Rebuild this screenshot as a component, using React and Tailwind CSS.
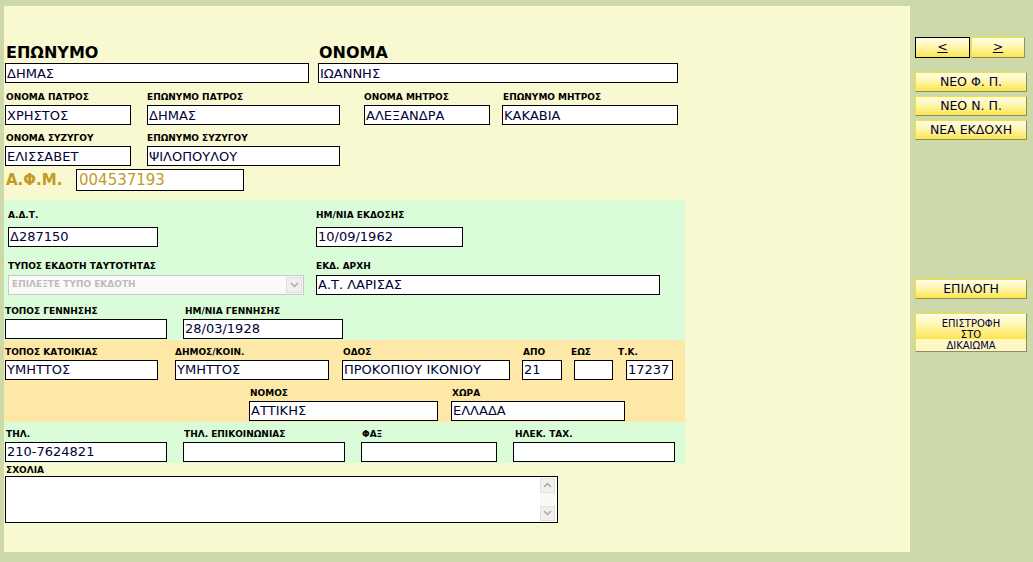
import React from "react";

const INP =
  "block h-[20px] border border-black bg-white px-[1px] text-[13px] text-[#000033] outline-none font-['DejaVu_Sans',sans-serif] rounded-none";

function Label({ children, className = "" }) {
  return (
    <div
      className={
        "h-[12px] text-[9px] leading-[12px] font-bold text-black whitespace-nowrap " +
        className
      }
    >
      {children}
    </div>
  );
}

function Field({ label, value = "", w, className = "", gap = "gap-[2px]", labelClass = "" }) {
  return (
    <div className={"flex flex-col " + gap + " " + className}>
      <Label className={labelClass}>{label}</Label>
      <input readOnly value={value} className={INP + " " + w} />
    </div>
  );
}

const BTN =
  "flex items-center justify-center border border-[#f2e22a] border-r-[#8f8d5e] border-b-[#8f8d5e] bg-linear-to-b from-[#fffdea] via-[#fff5a6] to-[#fde444] text-[12.5px] text-[#000033] font-['DejaVu_Sans',sans-serif]";

function Chevron({ up = false }) {
  return (
    <svg width="9" height="6" viewBox="0 0 9 6">
      <path
        d={up ? "M1 5 L4.5 1.5 L8 5" : "M1 1 L4.5 4.5 L8 1"}
        fill="none"
        stroke="#a8a8a8"
        strokeWidth="1.5"
      />
    </svg>
  );
}

export default function App() {
  return (
    <div className="w-[1033px] h-[562px] bg-[#cdd9a8] flex font-['DejaVu_Sans',sans-serif] text-black">
      {/* Main panel */}
      <div className="ml-[4px] mt-[6px] w-[906px] h-[546px] bg-[#f8f8d1] flex flex-col">
        {/* Row 1 */}
        <div className="flex pl-[1px] pt-[38px]">
          <div className="flex flex-col gap-[1px]">
            <div className="h-[18px] text-[16px] leading-[18px] font-bold pl-[1px]">ΕΠΩΝΥΜΟ</div>
            <input readOnly value="ΔΗΜΑΣ" className={INP + " w-[304px]"} />
          </div>
          <div className="flex flex-col gap-[1px] ml-[9px]">
            <div className="h-[18px] text-[16px] leading-[18px] font-bold pl-[1px]">ΟΝΟΜΑ</div>
            <input readOnly value="ΙΩΑΝΝΗΣ" className={INP + " w-[360px]"} />
          </div>
        </div>

        {/* Row 2 */}
        <div className="flex pl-[1px] mt-[8px]">
          <Field label="ΟΝΟΜΑ ΠΑΤΡΟΣ" value="ΧΡΗΣΤΟΣ" w="w-[126px]" labelClass="pl-[1px]" />
          <Field label="ΕΠΩΝΥΜΟ ΠΑΤΡΟΣ" value="ΔΗΜΑΣ" w="w-[193px]" className="ml-[16px]" />
          <Field label="ΟΝΟΜΑ ΜΗΤΡΟΣ" value="ΑΛΕΞΑΝΔΡΑ" w="w-[126px]" className="ml-[24px]" />
          <Field label="ΕΠΩΝΥΜΟ ΜΗΤΡΟΣ" value="ΚΑΚΑΒΙΑ" w="w-[176px]" className="ml-[12px]" labelClass="pl-[1px]" />
        </div>

        {/* Row 3 */}
        <div className="flex pl-[1px] mt-[7px]">
          <Field label="ΟΝΟΜΑ ΣΥΖΥΓΟΥ" value="ΕΛΙΣΣΑΒΕΤ" w="w-[126px]" labelClass="pl-[1px]" />
          <Field label="ΕΠΩΝΥΜΟ ΣΥΖΥΓΟΥ" value="ΨΙΛΟΠΟΥΛΟΥ" w="w-[193px]" className="ml-[16px]" />
        </div>

        {/* ΑΦΜ */}
        <div className="flex items-center pl-[2px] mt-[3px]">
          <div className="w-[70px] text-[15px] font-bold text-[#c49a22]">Α.Φ.Μ.</div>
          <input
            readOnly
            value="004537193"
            className="block h-[22px] w-[168px] border border-black bg-white pl-[2px] text-[15px] text-[#c49a22] outline-none font-['DejaVu_Sans',sans-serif]"
          />
        </div>

        {/* Green section 1 */}
        <div className="mt-[8px] w-[681px] bg-[#dafcd9] flex flex-col pt-[9px] pb-[1px]">
          <div className="flex">
            <Field label="Α.Δ.Τ." value="Δ287150" w="w-[150px]" className="ml-[4px]" gap="gap-[6px]" />
            <Field label="ΗΜ/ΝΙΑ ΕΚΔΟΣΗΣ" value="10/09/1962" w="w-[147px]" className="ml-[158px]" gap="gap-[6px]" />
          </div>
          <div className="flex mt-[13px]">
            <div className="ml-[4px] flex flex-col gap-[3px]">
              <Label>ΤΥΠΟΣ ΕΚΔΟΤΗ ΤΑΥΤΟΤΗΤΑΣ</Label>
              <div className="w-[296px] h-[20px] border border-[#c8c8c8] bg-[#fafafa] flex items-center">
                <span className="flex-1 pl-[3px] text-[9px] font-bold text-[#bcbcbc] whitespace-nowrap">
                  ΕΠΙΛΕΞΤΕ ΤΥΠΟ ΕΚΔΟΤΗ
                </span>
                <div className="w-[16px] h-[16px] mr-[1px] border border-[#dedede] bg-[#efefef] flex items-center justify-center">
                  <Chevron />
                </div>
              </div>
            </div>
            <Field label="ΕΚΔ. ΑΡΧΗ" value="Α.Τ. ΛΑΡΙΣΑΣ" w="w-[344px]" className="ml-[12px]" gap="gap-[3px]" />
          </div>
          <div className="flex mt-[10px]">
            <Field label="ΤΟΠΟΣ ΓΕΝΝΗΣΗΣ" value="" w="w-[162px]" className="ml-[1px]" />
            <Field label="ΗΜ/ΝΙΑ ΓΕΝΝΗΣΗΣ" value="28/03/1928" w="w-[160px]" className="ml-[16px]" labelClass="pl-[2px]" />
          </div>
        </div>

        {/* Orange section */}
        <div className="w-[681px] bg-[#fde8a8] flex flex-col pt-[6px] pb-[1px]">
          <div className="flex">
            <Field label="ΤΟΠΟΣ ΚΑΤΟΙΚΙΑΣ" value="ΥΜΗΤΤΟΣ" w="w-[153px]" className="ml-[1px]" />
            <Field label="ΔΗΜΟΣ/ΚΟΙΝ." value="ΥΜΗΤΤΟΣ" w="w-[154px]" className="ml-[17px]" />
            <Field label="ΟΔΟΣ" value="ΠΡΟΚΟΠΙΟΥ ΙΚΟΝΙΟΥ" w="w-[168px]" className="ml-[13px]" labelClass="pl-[1px]" />
            <Field label="ΑΠΟ" value="21" w="w-[40px]" className="ml-[12px]" labelClass="pl-[1px]" />
            <Field label="ΕΩΣ" value="" w="w-[39px]" className="ml-[12px]" labelClass="-ml-[3px]" />
            <Field label="Τ.Κ." value="17237" w="w-[47px]" className="ml-[13px]" labelClass="-ml-[8px]" />
          </div>
          <div className="flex mt-[7px]">
            <Field label="ΝΟΜΟΣ" value="ΑΤΤΙΚΗΣ" w="w-[189px]" className="ml-[245px]" labelClass="pl-[1px]" />
            <Field label="ΧΩΡΑ" value="ΕΛΛΑΔΑ" w="w-[174px]" className="ml-[13px]" labelClass="pl-[1px]" />
          </div>
        </div>

        {/* Green section 2 */}
        <div className="w-[681px] bg-[#dafcd9] flex pt-[6px] pb-[1px]">
          <Field label="ΤΗΛ." value="210-7624821" w="w-[162px]" className="ml-[1px]" labelClass="pl-[1px]" />
          <Field label="ΤΗΛ. ΕΠΙΚΟΙΝΩΝΙΑΣ" value="" w="w-[162px]" className="ml-[16px]" labelClass="pl-[1px]" />
          <Field label="ΦΑΞ" value="" w="w-[136px]" className="ml-[16px]" labelClass="pl-[1px]" />
          <Field label="ΗΛΕΚ. ΤΑΧ." value="" w="w-[162px]" className="ml-[16px]" labelClass="pl-[2px]" />
        </div>

        {/* Comments */}
        <div className="flex flex-col ml-[1px] mt-[1px]">
          <Label className="pl-[1px]">ΣΧΟΛΙΑ</Label>
          <div className="w-[553px] h-[47px] border border-black bg-white flex">
            <textarea readOnly className="flex-1 resize-none outline-none bg-white" />
            <div className="w-[15px] mr-[2px] my-[1px] bg-[#f8f8f4] flex flex-col justify-between">
              <div className="h-[15px] border border-[#e2e2dc] bg-[#f0f0ec] flex items-center justify-center">
                <Chevron up />
              </div>
              <div className="h-[15px] border border-[#e2e2dc] bg-[#f0f0ec] flex items-center justify-center">
                <Chevron />
              </div>
            </div>
          </div>
        </div>
      </div>

      {/* Right column */}
      <div className="ml-[5px] pt-[37px] flex flex-col w-[112px]">
        <div className="flex gap-[1px]">
          <div className={BTN + " w-[55px] h-[21px] !border-black"}>
            <span className="underline">&lt;</span>
          </div>
          <div className={BTN + " w-[54px] h-[21px]"}>
            <span className="underline">&gt;</span>
          </div>
        </div>
        <div className={BTN + " mt-[14px] h-[20px]"}>ΝΕΟ Φ. Π.</div>
        <div className={BTN + " mt-[4px] h-[20px]"}>ΝΕΟ Ν. Π.</div>
        <div className={BTN + " mt-[4px] h-[20px]"}>ΝΕΑ ΕΚΔΟΧΗ</div>
        <div className={BTN + " mt-[139px] h-[20px]"}>ΕΠΙΛΟΓΗ</div>
        <div className="mt-[14px] h-[39px] flex flex-col items-center pt-[4px] border border-[#f2e22a] border-r-[#8f8d5e] border-b-[#8f8d5e] bg-[#fff7c4] bg-linear-to-b from-[#fffdea] via-[#fff5a6] to-[#fde444] bg-[length:100%_25px] bg-no-repeat text-[10px] leading-[11px] text-[#000033]">
          <span>ΕΠΙΣΤΡΟΦΗ</span>
          <span>ΣΤΟ</span>
          <span>ΔΙΚΑΙΩΜΑ</span>
        </div>
      </div>
    </div>
  );
}
